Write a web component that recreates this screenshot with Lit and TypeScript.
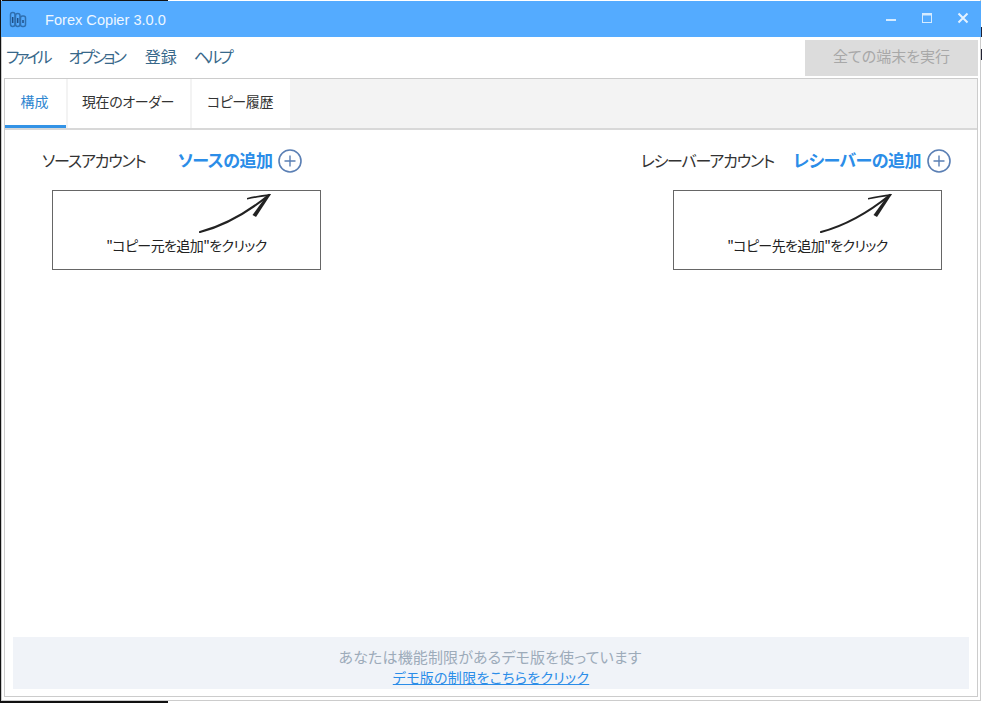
import { LitElement, html, css, svg } from "lit";
import { customElement } from "lit/decorators.js";

const arrow = svg`
  <svg class="arrow" width="74" height="42" viewBox="0 0 74 42">
    <path d="M1 40 C20 35 44 24 70 3" fill="none" stroke="#222" stroke-width="2.2" stroke-linecap="round"/>
    <path d="M48 6 C56 4 63 3 72 2 L70 4 C62 5 56 6 48 7.4 Z" fill="#222"/>
    <path d="M72 2 L57 25 L53.5 23 L68 3 Z" fill="#222"/>
  </svg>
`;

const plus = svg`
  <svg class="plus" width="24" height="24" viewBox="0 0 24 24">
    <circle cx="12" cy="12" r="11" fill="none" stroke="#5a7fb4" stroke-width="1.6"/>
    <path d="M12 6.5V17.5M6.5 12H17.5" stroke="#5a7fb4" stroke-width="1.4"/>
  </svg>
`;

@customElement("app-root")
export class AppRoot extends LitElement {
  static styles = css`
    :host {
      display: block;
      width: 982px;
      height: 703px;
      overflow: hidden;
      background:
        linear-gradient(#111, #111) 0 0 / 168px 1px no-repeat,
        linear-gradient(#111, #111) 0 0 / 1px 100% no-repeat,
        linear-gradient(#111, #111) 0 100% / 168px 2px no-repeat,
        linear-gradient(#223, #223) 981px 27px / 1px 10px no-repeat,
        linear-gradient(#223, #223) 981px 49px / 1px 11px no-repeat,
        #fff;
      font-family: "Noto Sans CJK JP", "Liberation Sans", sans-serif;
      font-feature-settings: "palt";
      color: #333;
    }
    .window {
      box-sizing: border-box;
      width: 980px;
      height: 701px;
      margin-left: 1px;
      border: 1px solid #ccc;
      border-top: 0;
      display: flex;
      flex-direction: column;
    }
    .titlebar {
      height: 36px;
      margin: 1px -1px 0;
      background: #54abff;
      display: flex;
      align-items: center;
      flex: none;
      color: #fff;
    }
    .logo {
      margin-left: 8px;
      margin-top: 2px;
    }
    .title {
      margin-left: 18px;
      padding-top: 1px;
      font: 14.6px "Liberation Sans", Arial, sans-serif;
      color: #eef7ff;
    }
    .controls {
      margin-left: auto;
      margin-right: 12px;
      margin-bottom: 2px;
      display: flex;
      align-items: center;
      gap: 24px;
    }
    .menubar {
      height: 41px;
      flex: none;
      display: flex;
      align-items: center;
      padding-left: 4px;
      padding-right: 2px;
    }
    .menu {
      display: flex;
      gap: 19px;
      padding-bottom: 3px;
      font-size: 16px;
      color: #38688a;
    }
    .menu .kana {
      letter-spacing: -3px;
    }
    .menu .kanji {
      margin: 0 -2px 0 2px;
    }
    .run {
      box-sizing: border-box;
      margin-left: auto;
      width: 173px;
      height: 36px;
      padding-bottom: 5px;
      display: flex;
      align-items: center;
      justify-content: center;
      background: #dcdcdc;
      color: #a8a8a8;
      font-size: 15px;
    }
    .panel {
      box-sizing: border-box;
      flex: 1;
      margin: 0 2px 3px 2px;
      border: 1px solid #ccc;
      display: flex;
      flex-direction: column;
    }
    .tabs {
      height: 49px;
      flex: none;
      background: #f3f3f3;
      border-bottom: 2px solid #d8d8d8;
      display: flex;
      gap: 2px;
    }
    .tab {
      box-sizing: border-box;
      background: #fff;
      font-size: 14px;
      display: flex;
      align-items: center;
      justify-content: center;
      height: 49px;
      padding: 0 2px 5px 0;
      color: #333;
      letter-spacing: -0.4px;
    }
    .tab.active {
      width: 61px;
      color: #2f86d0;
      letter-spacing: 0;
      padding-bottom: 2px;
      border-bottom: 3px solid #3393e6;
    }
    .tab.orders {
      width: 122px;
    }
    .tab.history {
      width: 98px;
    }
    .content {
      flex: 1;
      display: flex;
      justify-content: space-between;
      padding: 19px 26px 0 37px;
    }
    .col {
      display: flex;
      flex-direction: column;
    }
    .col.right {
      align-items: flex-end;
    }
    .head {
      height: 24px;
      display: flex;
      align-items: center;
      font-size: 16px;
      color: #333;
    }
    .label {
      letter-spacing: -1.2px;
      padding-bottom: 3px;
    }
    .add {
      font-size: 17px;
      font-weight: 700;
      letter-spacing: -0.5px;
      color: #2b8de8;
      margin-left: 32px;
      margin-right: 6px;
      padding-bottom: 3px;
    }
    .right .add {
      margin-left: 19px;
    }
    .hint {
      box-sizing: border-box;
      width: 269px;
      height: 80px;
      margin: 17px 10px 0;
      border: 1px solid #666;
      display: flex;
      flex-direction: column;
      align-items: center;
      font-size: 14px;
      letter-spacing: -0.6px;
      color: #222;
    }
    .right .hint {
      margin-right: 9px;
    }
    .arrow {
      margin: 1px 0 0 98px;
      flex: none;
    }
    .hint span {
      margin-top: 1px;
      line-height: 20px;
    }
    .banner {
      box-sizing: border-box;
      height: 52px;
      flex: none;
      margin: 0 8px 7px;
      padding-top: 8px;
      background: #f0f3f8;
      display: flex;
      flex-direction: column;
      align-items: center;
      justify-content: center;
      font-size: 15px;
      line-height: 21px;
      letter-spacing: 0.15px;
      color: #9dabba;
    }
    .banner span {
      padding-right: 2px;
    }
    .banner a {
      font-size: 14px;
      letter-spacing: 0.3px;
      color: #2b8de8;
      text-decoration: underline;
    }
  `;

  render() {
    return html`
      <div class="window">
        <div class="titlebar">
          <svg class="logo" width="18" height="18" viewBox="0 0 18 18" fill="none" stroke="#2f6fb0" stroke-width="1.5">
            <rect x="1.5" y="1.5" width="4.5" height="14" rx="2.2"/>
            <rect x="6.5" y="2.5" width="4.5" height="13" rx="2.2"/>
            <rect x="11.5" y="5" width="5" height="10.5" rx="2"/>
            <path d="M3.7 6V12M8.7 7V12M14 9V12" stroke="#1f4f86"/>
          </svg>
          <span class="title">Forex Copier 3.0.0</span>
          <div class="controls">
            <svg width="12" height="12" viewBox="0 0 12 12"><path d="M1 8H11" stroke="#d5ebff" stroke-width="2"/></svg>
            <svg width="12" height="12" viewBox="0 0 12 12" fill="none" stroke="#d5ebff"><rect x="1.5" y="1.5" width="9" height="9"/><path d="M1 2.5H11" stroke-width="2"/></svg>
            <svg width="12" height="12" viewBox="0 0 12 12"><path d="M1.5 1.5L10.5 10.5M10.5 1.5L1.5 10.5" stroke="#e4f2ff" stroke-width="2"/></svg>
          </div>
        </div>
        <div class="menubar">
          <div class="menu">
            <span class="kana">ファイル</span><span class="kana">オプション</span><span class="kanji">登録</span><span class="kana">ヘルプ</span>
          </div>
          <div class="run">全ての端末を実行</div>
        </div>
        <div class="panel">
          <div class="tabs">
            <div class="tab active">構成</div>
            <div class="tab orders">現在のオーダー</div>
            <div class="tab history">コピー履歴</div>
          </div>
          <div class="content">
            <div class="col">
              <div class="head">
                <span class="label">ソースアカウント</span><span class="add">ソースの追加</span>${plus}
              </div>
              <div class="hint">${arrow}<span>"コピー元を追加"をクリック</span></div>
            </div>
            <div class="col right">
              <div class="head">
                <span class="label">レシーバーアカウント</span><span class="add">レシーバーの追加</span>${plus}
              </div>
              <div class="hint">${arrow}<span>"コピー先を追加"をクリック</span></div>
            </div>
          </div>
          <div class="banner">
            <span>あなたは機能制限があるデモ版を使っています</span>
            <a>デモ版の制限をこちらをクリック</a>
          </div>
        </div>
      </div>
    `;
  }
}
